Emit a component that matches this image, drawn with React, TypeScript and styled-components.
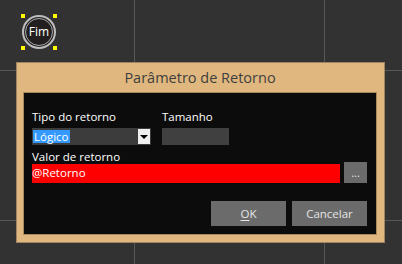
import React from 'react';
import styled, { createGlobalStyle } from 'styled-components';

const GlobalStyle = createGlobalStyle`
  html, body {
    margin: 0;
    padding: 0;
    background: #323232;
  }
  * {
    box-sizing: border-box;
  }
`;

const Canvas = styled.div`
  position: relative;
  width: 402px;
  height: 264px;
  overflow: hidden;
  background-color: #323232;
  background-image: linear-gradient(to right, #585858 1px, transparent 1px),
    linear-gradient(to bottom, #585858 1px, transparent 1px);
  background-size: 190px 150px;
  background-position: 134px 70px;
  font-family: 'Open Sans', 'Noto Sans', sans-serif;
`;

const Node = styled.div`
  position: absolute;
  left: 21px;
  top: 14px;
  width: 36px;
  height: 36px;
  display: flex;
  align-items: center;
  justify-content: center;
`;

const NodeCircle = styled.div`
  width: 34px;
  height: 34px;
  border-radius: 50%;
  border: 2px solid #bdbdbd;
  padding: 1px;
  background: #2a2728;
  display: flex;
  align-items: center;
  justify-content: center;
`;

const NodeInner = styled.div`
  width: 100%;
  height: 100%;
  border-radius: 50%;
  border: 1px solid #a8a8a8;
  background: #231f20;
  display: flex;
  align-items: center;
  justify-content: center;
  color: #ffffff;
  font-size: 12px;
  line-height: 1;
`;

const Handle = styled.span<{ $x: 'l' | 'r'; $y: 't' | 'b' }>`
  position: absolute;
  width: 4px;
  height: 4px;
  background: #ffff00;
  ${(p) => (p.$x === 'l' ? 'left: 0;' : 'right: 0;')}
  ${(p) => (p.$y === 't' ? 'top: 0;' : 'bottom: 0;')}
`;

const Dialog = styled.div`
  position: absolute;
  left: 16px;
  top: 62px;
  width: 369px;
  height: 181px;
  background: #e0b87f;
  border: 1px solid #9e8460;
  padding: 0 7px 7px 6px;
  display: flex;
  flex-direction: column;
`;

const Title = styled.div`
  height: 29px;
  display: flex;
  align-items: center;
  justify-content: center;
  color: #3e3e3e;
  font-size: 14.5px;
`;

const Panel = styled.div`
  flex: 1;
  background: #0c0c0c;
  border: 1px solid #a78a5e;
  padding: 16px 9px 0 8px;
  display: flex;
  flex-direction: column;
`;

const FieldsRow = styled.div`
  display: flex;
  gap: 11px;
`;

const Field = styled.div<{ $w: number }>`
  width: ${(p) => p.$w}px;
  display: flex;
  flex-direction: column;
`;

const Label = styled.div`
  color: #ffffff;
  font-size: 11.5px;
  line-height: 16px;
  margin-bottom: 3px;
  white-space: nowrap;
`;

const Combo = styled.div`
  height: 17px;
  background: #3c3c3c;
  display: flex;
  align-items: center;
  padding-left: 1px;
`;

const ComboText = styled.span`
  flex: 1;
  display: flex;
  align-items: center;
`;

const Selected = styled.span`
  background: #3399ff;
  color: #ffffff;
  font-size: 11.5px;
  line-height: 13px;
  padding: 0 1px;
`;

const ComboButton = styled.div`
  width: 12px;
  height: 15px;
  margin-right: 1px;
  background: #f0f0f0;
  display: flex;
  align-items: center;
  justify-content: center;
`;

const Arrow = styled.span`
  width: 0;
  height: 0;
  border-left: 4px solid transparent;
  border-right: 4px solid transparent;
  border-top: 4px solid #000;
`;

const Input = styled.div`
  height: 17px;
  background: #404040;
`;

const ValueLabel = styled(Label)`
  margin-top: 4px;
  margin-bottom: 0;
  line-height: 15px;
`;

const ValueRow = styled.div`
  display: flex;
  align-items: flex-end;
  gap: 4px;
  margin-top: -2px;
`;

const RedInput = styled.div`
  width: 308px;
  height: 19px;
  background: #ff0000;
  color: #ffffff;
  font-size: 11.5px;
  line-height: 17px;
`;

const Ellipsis = styled.div`
  width: 23px;
  height: 21px;
  background: #6b6b6b;
  color: #e8e8e8;
  font-size: 11px;
  display: flex;
  align-items: center;
  justify-content: center;
`;

const ButtonRow = styled.div`
  display: flex;
  justify-content: flex-end;
  gap: 6px;
  margin-top: 18px;
`;

const Button = styled.div`
  width: 75px;
  height: 25px;
  background: #6b6b6b;
  color: #e6e6e6;
  font-size: 11.5px;
  display: flex;
  align-items: center;
  justify-content: center;
`;

const Mnemonic = styled.span`
  text-decoration: underline;
  text-underline-offset: 2px;
`;

export default function App() {
  return (
    <Canvas>
      <GlobalStyle />
      <Node>
        <NodeCircle>
          <NodeInner>Fim</NodeInner>
        </NodeCircle>
        <Handle $x="l" $y="t" />
        <Handle $x="r" $y="t" />
        <Handle $x="l" $y="b" />
        <Handle $x="r" $y="b" />
      </Node>
      <Dialog>
        <Title>Parâmetro de Retorno</Title>
        <Panel>
          <FieldsRow>
            <Field $w={119}>
              <Label>Tipo do retorno</Label>
              <Combo>
                <ComboText>
                  <Selected>Lógico</Selected>
                </ComboText>
                <ComboButton>
                  <Arrow />
                </ComboButton>
              </Combo>
            </Field>
            <Field $w={67}>
              <Label>Tamanho</Label>
              <Input />
            </Field>
          </FieldsRow>
          <ValueLabel>Valor de retorno</ValueLabel>
          <ValueRow>
            <RedInput>@Retorno</RedInput>
            <Ellipsis>...</Ellipsis>
          </ValueRow>
          <ButtonRow>
            <Button>
              <span>
                <Mnemonic>O</Mnemonic>K
              </span>
            </Button>
            <Button>Cancelar</Button>
          </ButtonRow>
        </Panel>
      </Dialog>
    </Canvas>
  );
}
